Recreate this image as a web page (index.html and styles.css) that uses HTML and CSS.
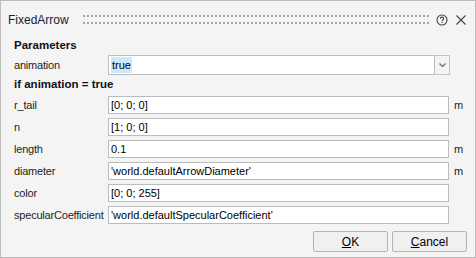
FILE: index.html
```html
<!DOCTYPE html>
<html lang="en">
<head>
    <meta charset="UTF-8">
    <title>FixedArrow</title>
    <link rel="stylesheet" href="styles.css">
</head>
<body>
    <div class="window">
        <div class="titlebar">
            <span class="title">FixedArrow</span>
            <div class="grip"></div>
            <svg class="tb-icon" width="12" height="12" viewBox="0 0 12 12">
                <circle cx="6" cy="6" r="5" fill="none" stroke="#444" stroke-width="1.1"/>
                <path d="M4.3 4.7 C4.3 3.6 5 3.1 6 3.1 C7 3.1 7.7 3.7 7.7 4.6 C7.7 5.6 6.2 5.8 6.2 6.9" fill="none" stroke="#444" stroke-width="1.1"/>
                <rect x="5.6" y="7.8" width="1.2" height="1.2" fill="#444"/>
            </svg>
            <svg class="tb-icon close" width="12" height="12" viewBox="0 0 12 12">
                <path d="M1.5 1.5 L10.5 10.5 M10.5 1.5 L1.5 10.5" stroke="#444" stroke-width="1.1"/>
            </svg>
        </div>

        <div class="content">
            <div class="heading">Parameters</div>
            <div class="row row-select">
                <label>animation</label>
                <div class="select">
                    <div class="select-value"><span class="sel">true</span></div>
                    <div class="select-btn">
                        <svg width="7" height="5" viewBox="0 0 7 5">
                            <path d="M0.5 0.5 L3.5 3.5 L6.5 0.5" fill="none" stroke="#777" stroke-width="1.5"/>
                        </svg>
                    </div>
                </div>
            </div>

            <div class="heading heading-if">if animation = true</div>
            <div class="rows">
                <div class="row">
                    <label>r_tail</label>
                    <div class="field">[0; 0; 0]</div>
                    <span class="unit">m</span>
                </div>
                <div class="row">
                    <label>n</label>
                    <div class="field">[1; 0; 0]</div>
                    <span class="unit"></span>
                </div>
                <div class="row">
                    <label>length</label>
                    <div class="field">0.1</div>
                    <span class="unit">m</span>
                </div>
                <div class="row">
                    <label>diameter</label>
                    <div class="field">'world.defaultArrowDiameter'</div>
                    <span class="unit">m</span>
                </div>
                <div class="row">
                    <label>color</label>
                    <div class="field">[0; 0; 255]</div>
                    <span class="unit"></span>
                </div>
                <div class="row">
                    <label>specularCoefficient</label>
                    <div class="field">'world.defaultSpecularCoefficient'</div>
                    <span class="unit"></span>
                </div>
            </div>

            <div class="buttons">
                <button><u>O</u>K</button>
                <button><u>C</u>ancel</button>
            </div>
        </div>
    </div>
</body>
</html>
```

FILE: styles.css
```css
* {
    box-sizing: border-box;
}

body {
    margin: 0;
    font-family: "Liberation Sans", Arial, sans-serif;
    font-size: 11px;
    color: #1e1e1e;
}

/* Window */
.window {
    width: 476px;
    height: 258px;
    border: 1px solid #bcbcbc;
    background: #f4f4f4;
}

/* Title bar */
.titlebar {
    height: 37px;
    display: flex;
    align-items: center;
    padding: 0 0 0 7px;
}

.title {
    font-size: 12px;
    color: #222033;
    margin-top: 1px;
}

.grip {
    flex: 1;
    height: 9px;
    margin: 0 6px 0 14px;
    background:
        linear-gradient(90deg, #a4a4a4 2px, transparent 2px) 0 0 / 4px 2px repeat-x,
        linear-gradient(90deg, #a4a4a4 2px, transparent 2px) 0 100% / 4px 2px repeat-x;
}

.tb-icon {
    display: block;
    margin-right: 7px;
}

.tb-icon.close {
    margin-right: 8px;
}

/* Content */
.content {
    padding: 0 0 0 13px;
}

.heading {
    font-weight: bold;
    font-size: 11.5px;
    height: 14px;
    line-height: 14px;
    color: #111;
}

.heading-if {
    margin-top: 2px;
}

.row {
    display: flex;
    align-items: center;
    height: 18px;
}

.row label {
    width: 94px;
    flex: none;
    white-space: nowrap;
    letter-spacing: -0.2px;
}

.row-select {
    height: 20px;
    margin-top: 3px;
}

.rows {
    display: flex;
    flex-direction: column;
    gap: 4px;
    margin-top: 5px;
}

.field {
    width: 341px;
    height: 18px;
    line-height: 16px;
    border: 1px solid #bcbcbc;
    background: #fff;
    padding-left: 2px;
    color: #000;
    white-space: nowrap;
}

.unit {
    margin-left: 5px;
    color: #1e1e1e;
}

/* Select */
.select {
    display: flex;
    height: 20px;
}

.select-value {
    width: 327px;
    border: 1px solid #bcbcbc;
    background: #fff;
    padding: 1px 2px;
    line-height: 16px;
}

.sel {
    display: inline-block;
    background: #cce8ff;
    padding: 0 1px;
    color: #000;
}

.select-btn {
    width: 15px;
    border: 1px solid #c4c4c4;
    border-left: none;
    background: #f4f4f4;
    display: flex;
    align-items: center;
    justify-content: center;
}

/* Buttons */
.buttons {
    display: flex;
    justify-content: flex-end;
    gap: 4px;
    margin-top: 7px;
    padding-right: 8px;
}

.buttons button {
    width: 75px;
    height: 21px;
    border: 1px solid #b4b4b4;
    border-radius: 2px;
    background: #f0f0f0;
    font-family: "Liberation Sans", Arial, sans-serif;
    font-size: 12px;
    color: #000;
    padding: 0;
}
```
